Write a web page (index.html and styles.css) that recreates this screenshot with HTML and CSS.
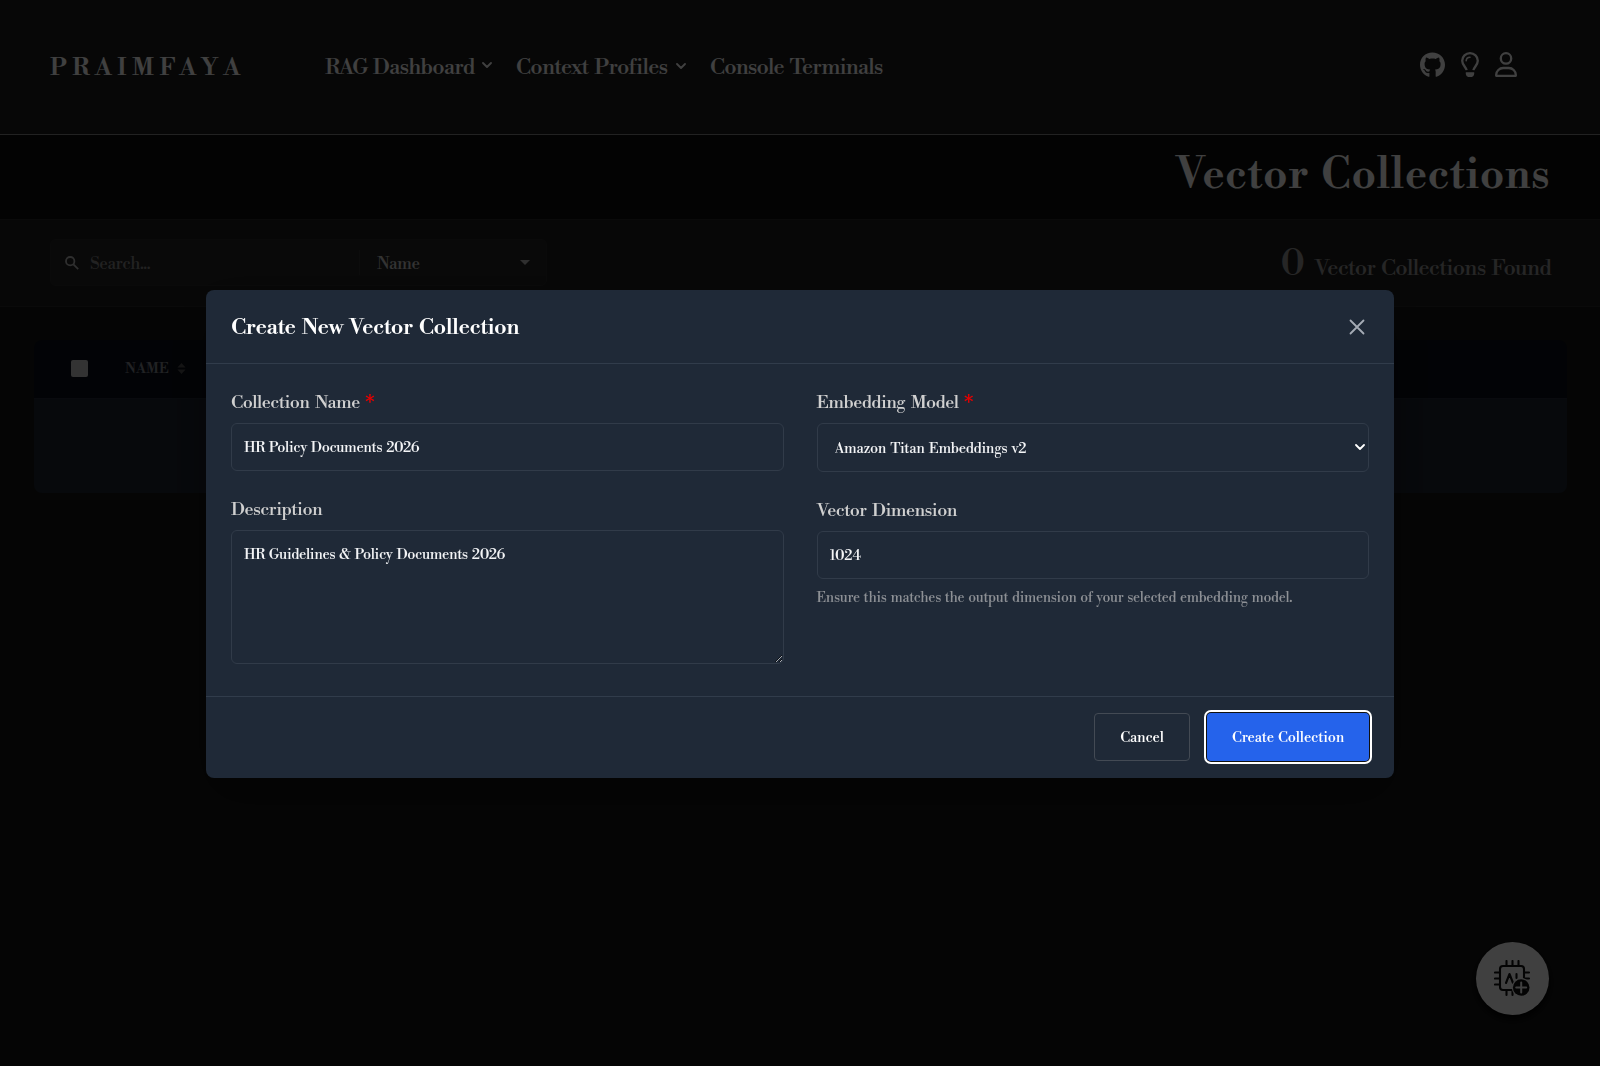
FILE: index.html
```html
<!DOCTYPE html>
<html lang="en">
<head>
  <meta charset="UTF-8">
  <title>Praimfaya - Vector Collections</title>
  <link rel="stylesheet" href="styles.css">
</head>
<body>
  <header class="navbar">
    <a class="brand">PRAIMFAYA</a>
    <nav class="nav-links">
      <a class="rag">RAG Dashboard <svg class="chevron" viewBox="0 0 10 7"><path d="M1 1l4 4 4-4"/></svg></a>
      <a class="profiles">Context Profiles <svg class="chevron" viewBox="0 0 10 7"><path d="M1 1l4 4 4-4"/></svg></a>
      <a class="terminals">Console Terminals</a>
    </nav>
    <div class="nav-icons">
      <svg class="icon-github" viewBox="0 0 496 496"><path d="M165.9 397.4c0 2-2.3 3.6-5.2 3.6-3.3.3-5.6-1.3-5.6-3.6 0-2 2.3-3.6 5.2-3.6 3-.3 5.6 1.3 5.6 3.6zm-31.1-4.5c-.7 2 1.3 4.3 4.3 4.9 2.6 1 5.6 0 6.2-2s-1.3-4.3-4.3-5.2c-2.6-.7-5.5.3-6.2 2.3zm44.2-1.7c-2.9.7-4.9 2.6-4.6 4.9.3 2 2.9 3.3 5.9 2.6 2.9-.7 4.9-2.6 4.6-4.6-.3-1.9-3-3.2-5.9-2.9zM244.8 8C106.1 8 0 113.3 0 252c0 110.9 69.8 205.8 169.5 239.2 12.8 2.3 17.3-5.6 17.3-12.1 0-6.2-.3-40.4-.3-61.4 0 0-70 15-84.7-29.8 0 0-11.4-29.1-27.8-36.6 0 0-22.9-15.7 1.6-15.4 0 0 24.9 2 38.6 25.8 21.9 38.6 58.6 27.5 72.9 20.9 2.3-16 8.8-27.1 16-33.7-55.9-6.2-112.3-14.3-112.3-110.5 0-27.5 7.6-41.3 23.6-58.9-2.6-6.5-11.1-33.3 2.6-67.9 20.9-6.5 69 27 69 27 20-5.6 41.5-8.5 62.8-8.5s42.8 2.9 62.8 8.5c0 0 48.1-33.6 69-27 13.7 34.7 5.2 61.4 2.6 67.9 16 17.7 25.8 31.5 25.8 58.9 0 96.5-58.9 104.2-114.8 110.5 9.2 7.9 17 22.9 17 46.4 0 33.7-.3 75.4-.3 83.6 0 6.5 4.6 14.4 17.3 12.1C428.2 457.8 496 362.9 496 252 496 113.3 383.5 8 244.8 8z"/></svg>
      <svg class="icon-bulb" viewBox="0 0 18 25">
        <path class="line" d="M5.6 18.2C5.2 15.4 1.2 13.2 1.2 8.8a7.8 7.6 0 0 1 15.6 0c0 4.4-4 6.6-4.4 9.4"/>
        <path class="thin" d="M5.2 8.8A3.8 3.8 0 0 1 9 5.2"/>
        <path d="M4.8 20.2h8.4v1.2a4.2 3.6 0 0 1-8.4 0z"/>
      </svg>
      <svg class="icon-user" viewBox="0 0 22 25">
        <circle class="line" cx="11" cy="6.4" r="5.2"/>
        <path class="line" d="M1.2 23.8v-1a7 7 0 0 1 7-6.8h5.6a7 7 0 0 1 7 6.8v1z"/>
      </svg>
    </div>
  </header>

  <div class="page-title"><h1>Vector Collections</h1></div>

  <section class="toolbar">
    <div class="search-box">
      <svg class="icon-search" viewBox="0 0 14 14"><circle cx="5.2" cy="5.2" r="4.2"/><path d="M8.4 8.4l4.8 4.8"/></svg>
      <span class="placeholder">Search...</span>
      <span class="filter">Name</span>
      <span class="caret"></span>
    </div>
    <div class="count"><span class="number">0</span> Vector Collections Found</div>
  </section>

  <div class="table">
    <div class="thead">
      <span class="check"></span>
      <span class="th">NAME</span>
      <svg class="icon-sort" viewBox="0 0 10 12"><path d="M5 0l4.5 5h-9zM5 12L.5 7h9z"/></svg>
    </div>
    <div class="tbody"></div>
  </div>

  <button class="fab">
    <svg viewBox="0 0 38 38">
      <rect class="chip" x="6" y="6" width="24" height="24" rx="3"/>
      <path class="chip" d="M12.5 1v4M18.5 1v4M24.5 1v4M1 12.5h4M1 18.5h4M1 24.5h4M31 12.5h4M31 18.5h4M12.5 31v4M18.5 31v4"/>
      <path class="chip" d="M12 23l3.5-9 3.5 9M22.5 14v4"/>
      <circle class="halo" cx="27.2" cy="27.5" r="9.4"/>
      <circle class="disc" cx="27.2" cy="27.5" r="8.3"/>
      <path class="plus" d="M27.2 22.5v10M22.2 27.5h10"/>
    </svg>
  </button>

  <div class="overlay">
    <form class="modal">
      <div class="modal-header">
        <h2>Create New Vector Collection</h2>
        <svg class="close" viewBox="0 0 16 16"><path d="M1.5 1.5l13 13M14.5 1.5l-13 13"/></svg>
      </div>
      <div class="modal-body">
        <div class="column">
          <label for="name">Collection Name <span class="required">*</span></label>
          <input type="text" id="name" value="HR Policy Documents 2026">
          <label for="description">Description</label>
          <textarea id="description">HR Guidelines &amp; Policy Documents 2026</textarea>
        </div>
        <div class="column">
          <label for="model">Embedding Model <span class="required">*</span></label>
          <div class="select-wrap">
            <select id="model"><option>Amazon Titan Embeddings v2</option></select>
            <svg class="chevron" viewBox="0 0 10 7"><path d="M1 1l4 4 4-4"/></svg>
          </div>
          <label for="dimension">Vector Dimension</label>
          <input type="text" id="dimension" value="1024">
          <small>Ensure this matches the output dimension of your selected embedding model.</small>
        </div>
      </div>
      <div class="modal-footer">
        <button type="button" class="btn cancel">Cancel</button>
        <button type="button" class="btn create">Create Collection</button>
      </div>
    </form>
  </div>
</body>
</html>
```
FILE: styles.css
```css
* { box-sizing: border-box; }
body {
  margin: 0;
  height: 1066px;
  overflow: hidden;
  background: #171717;
  color: #fff;
  font-family: 'Libre Bodoni', 'Liberation Serif', serif;
}
svg { display: block; }

/* navbar */
.navbar {
  display: flex;
  align-items: center;
  height: 135px;
  padding: 0 83px 0 50px;
  background: #1e1e1e;
  border-bottom: 1px solid #888;
}
.brand { width: 275px; padding-top: 1px; font-size: 24px; font-weight: 600; letter-spacing: 5.6px; }
.nav-links { display: flex; font-size: 22px; }
.nav-links a { display: flex; align-items: center; white-space: pre; }
.rag { width: 191px; word-spacing: 1.5px; letter-spacing: -0.8px; }
.profiles { width: 194px; word-spacing: 2px; letter-spacing: -0.8px; }
.terminals { word-spacing: 2px; letter-spacing: -0.92px; }
.chevron { width: 10px; height: 7px; fill: none; stroke: currentColor; stroke-width: 1.8; stroke-linecap: round; stroke-linejoin: round; }
.rag .chevron { margin: 0 0 4px 2px; }
.profiles .chevron { margin: 0 0 2px 3px; }
.nav-icons { display: flex; align-items: center; gap: 16px; margin: 0 0 6px auto; }
.nav-icons svg { height: 25px; fill: #fff; }
.nav-icons .line, .nav-icons .thin { fill: none; stroke: #fff; stroke-width: 2.3; stroke-linejoin: round; }
.nav-icons .thin { stroke-width: 1.6; stroke-linecap: round; }
.icon-github { width: 25px; }
.icon-bulb { width: 18px; }
.icon-user { width: 22px; }

.page-title { height: 84px; padding: 14px 50px 0; background: #0f0f0f; text-align: right; }
h1 { margin: 0; font-size: 42.5px; font-weight: 600; line-height: 54px; word-spacing: 4px; letter-spacing: 0.5px; }

/* search + count */
.toolbar {
  display: flex;
  justify-content: space-between;
  height: 88px;
  padding: 19px 49px 0 50px;
  background: #1e1e1e;
  border-top: 1px solid #282828;
  border-bottom: 1px solid #282828;
}
.search-box {
  display: flex;
  align-items: center;
  width: 497px;
  height: 47px;
  padding: 0 16px 0 14px;
  background: #242424;
  border: 1px solid #2b2b2b;
  border-radius: 6px;
  font-size: 17px;
  letter-spacing: -0.45px;
}
.icon-search { width: 14px; height: 14px; fill: none; stroke: #bbb; stroke-width: 1.8; }
.placeholder { width: 269px; margin-left: 11px; padding-top: 2px; color: #888; }
.filter { height: 25px; padding-left: 17px; line-height: 28px; border-left: 1px solid #333; color: #ccc; }
.caret { margin-left: auto; border: 5px solid transparent; border-top-color: #bbb; border-bottom: 0; }
.count { height: 62px; line-height: 50px; color: #999; font-size: 22px; word-spacing: 2px; letter-spacing: -0.75px; }
.number { margin-right: 4px; font-size: 37px; color: #999; }

.table { margin: 33px 33px 0 34px; border-radius: 8px; overflow: hidden; }
.thead { display: flex; align-items: center; height: 58px; padding: 0 0 2px 37px; background: #0a0e18; }
.check { width: 17px; height: 17px; margin-right: 37px; border-radius: 2px; background: #ccc; }
.th { padding-top: 2px; font-size: 14px; font-weight: 600; letter-spacing: 0.2px; color: #838891; }
.icon-sort { width: 9px; height: 11px; margin-left: 8px; fill: #555; }
.tbody { height: 95px; background: #1d2531; border-top: 1px solid #242b38; }

.fab {
  position: absolute;
  right: 51px;
  bottom: 51px;
  width: 73px;
  height: 73px;
  padding: 0 0 0 18px;
  border: 0;
  border-radius: 50%;
  background: #fff;
  box-shadow: 0 4px 10px #000;
}
.fab svg { width: 38px; height: 38px; fill: none; stroke-linecap: round; stroke-linejoin: round; }
.chip { stroke: #111; stroke-width: 2.1; }
.halo { fill: #fff; }
.disc { fill: #111; }
.plus { stroke: #fff; stroke-width: 2; }

/* modal */
.overlay {
  position: fixed;
  inset: 0;
  display: flex;
  align-items: center;
  justify-content: center;
  padding-top: 2px;
  background: rgba(0, 0, 0, 0.75);
}
.modal {
  width: 1188px;
  height: 488px;
  border-radius: 8px;
  background: #1f2937;
  box-shadow: 0 20px 50px rgba(0, 0, 0, 0.4);
}
.modal-header {
  display: flex;
  align-items: center;
  justify-content: space-between;
  height: 74px;
  padding: 0 29px 0 25px;
  border-bottom: 1px solid #313c4b;
}
h2 { margin: 0; padding-top: 2px; font-size: 22px; font-weight: 500; word-spacing: 2.5px; letter-spacing: -0.53px; }
.close { width: 16px; height: 16px; fill: none; stroke: #a5abb5; stroke-width: 1.8; stroke-linecap: round; }
.modal-body { display: grid; grid-template-columns: 1fr 1fr; gap: 33px; height: 332px; padding: 27px 25px 0; }
.column { display: flex; flex-direction: column; }
label { height: 22px; margin-bottom: 10px; font-size: 18px; line-height: 23px; word-spacing: 2.5px; letter-spacing: -0.6px; color: #d0d0d0; }
.required { font-family: 'DejaVu Serif', serif; font-weight: bold; line-height: 1; color: #e60000; }
input, select, textarea {
  width: 100%;
  height: 48px;
  padding: 2px 12px 0;
  border: 1px solid #313b49;
  border-radius: 6px;
  background: #1f2937;
  color: #f3f4f6;
  font-family: inherit;
  font-size: 14.5px;
  word-spacing: 1.5px;
  letter-spacing: -0.43px;
  outline: none;
}
input { margin-bottom: 27px; }
textarea { height: 134px; padding-top: 15px; resize: vertical; }
.select-wrap { position: relative; margin-bottom: 27px; }
select { display: block; height: 49px; padding-left: 17px; appearance: none; letter-spacing: -0.35px; }
.select-wrap .chevron { position: absolute; right: 4px; top: 21px; }
#dimension { margin-bottom: 10px; letter-spacing: -0.2px; }
small { font-size: 14px; line-height: 19px; word-spacing: 1.2px; letter-spacing: -0.3px; color: #8d9095; }
.modal-footer {
  display: flex;
  justify-content: flex-end;
  gap: 17px;
  height: 82px;
  padding: 16px 25px 0;
  border-top: 1px solid #313c4b;
}
.btn { height: 48px; padding-top: 3px; border-radius: 4px; color: #fff; font-family: inherit; font-size: 14.5px; word-spacing: 1.5px; letter-spacing: -0.2px; }
.cancel { width: 96px; border: 1px solid #434a54; background: #1f2937; }
.create { width: 162px; border: 0; background: #2563eb; box-shadow: 0 0 0 1px #101010, 0 0 0 3px #fff; }
```
